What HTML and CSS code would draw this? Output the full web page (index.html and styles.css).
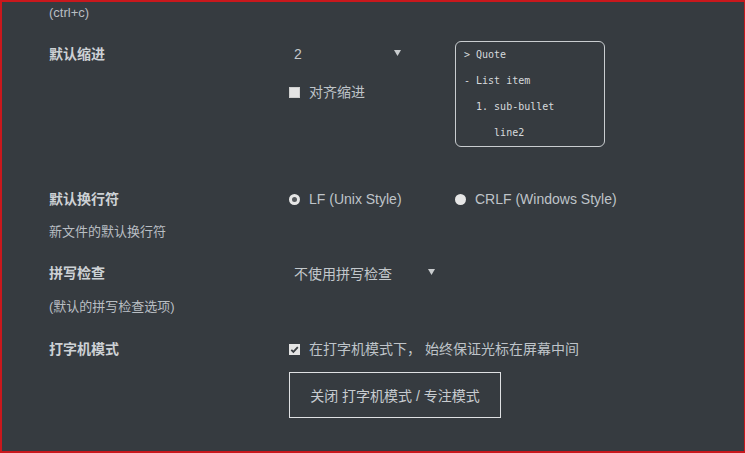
FILE: index.html
```html
<!DOCTYPE html>
<html lang="zh">
<head>
<meta charset="utf-8">
<title>设置</title>
<link rel="stylesheet" href="styles.css">
</head>
<body>
<div class="frame">
  <div class="settings">
    <div class="row row-copy">
      <div class="desc">(ctrl+c)</div>
    </div>

    <div class="row row-indent">
      <div class="label">默认缩进</div>
      <div class="control indent-control">
        <div class="indent-left">
          <div class="select select-short">
            <span class="select-text">2</span>
            <svg class="arrow" width="7" height="6" viewBox="0 0 7 6"><path d="M0 0 H7 L3.5 6 Z" fill="#c9ccce"/></svg>
          </div>
          <div class="check-line check-align">
            <span class="checkbox"></span>
            <span class="check-text">对齐缩进</span>
          </div>
        </div>
        <div class="preview">
          <div class="pline">&gt; Quote</div>
          <div class="pline">- List item</div>
          <div class="pline">  1. sub-bullet</div>
          <div class="pline">     line2</div>
        </div>
      </div>
    </div>

    <div class="row row-eol">
      <div class="label">默认换行符</div>
      <div class="control radios">
        <div class="radio-item radio-lf">
          <span class="radio checked"></span>
          <span class="check-text">LF (Unix Style)</span>
        </div>
        <div class="radio-item">
          <span class="radio"></span>
          <span class="check-text">CRLF (Windows Style)</span>
        </div>
      </div>
      <div class="desc desc-gap">新文件的默认换行符</div>
    </div>

    <div class="row row-spell">
      <div class="label">拼写检查</div>
      <div class="control">
        <div class="select select-long">
          <span class="select-text">不使用拼写检查</span>
          <svg class="arrow" width="7" height="6" viewBox="0 0 7 6"><path d="M0 0 H7 L3.5 6 Z" fill="#c9ccce"/></svg>
        </div>
      </div>
      <div class="desc desc-gap2">(默认的拼写检查选项)</div>
    </div>

    <div class="row row-type">
      <div class="label">打字机模式</div>
      <div class="control">
        <div class="check-line">
          <span class="checkbox checked">
            <svg width="11" height="11" viewBox="0 0 11 11"><path d="M2.3 5.8 L4.4 7.9 L8.8 3.2" fill="none" stroke="#3a3e42" stroke-width="1.8"/></svg>
          </span>
          <span class="check-text">在打字机模式下， 始终保证光标在屏幕中间</span>
        </div>
        <div class="button">关闭 打字机模式 / 专注模式</div>
      </div>
    </div>
  </div>
</div>
</body>
</html>
```

FILE: styles.css
```css
html, body {
  margin: 0;
  padding: 0;
  height: 100%;
}

body {
  background: #363b40;
  font-family: "Liberation Sans", "Noto Sans CJK SC", sans-serif;
  color: #b9bec3;
  overflow: hidden;
}

.frame {
  box-sizing: border-box;
  height: 453px;
  width: 745px;
  border: 2px solid #c9181d;
  border-right-width: 1px;
  background: #363b40;
}

.settings {
  padding: 1px 0 0 47px;
}

.row {
  display: grid;
  grid-template-columns: 240px auto;
  align-items: start;
}

.label {
  font-size: 14px;
  font-weight: bold;
  line-height: 20px;
  color: #cdd1d5;
}

.desc {
  grid-column: 1 / -1;
  font-size: 13px;
  line-height: 20px;
  color: #b9bec3;
}

.row-copy .desc {
  margin-top: 0;
}

/* indent row */
.row-indent {
  margin-top: 18px;
}

.row-indent .label {
  margin-top: 3px;
}

.indent-control {
  display: flex;
}

.indent-left {
  width: 166px;
  padding-top: 3px;
}

.select {
  display: flex;
  align-items: center;
  justify-content: space-between;
  box-sizing: border-box;
  height: 20px;
  padding: 0 4px 0 5px;
  font-size: 14px;
  color: #c3c8cc;
}

.select-short {
  width: 116px;
}

.select-long {
  width: 150px;
}

.arrow {
  margin-top: -3px;
}

.check-line {
  display: flex;
  align-items: center;
  height: 20px;
}

.check-align {
  margin-top: 18px;
}

.checkbox {
  box-sizing: border-box;
  width: 11px;
  height: 11px;
  background: #e4e4e4;
  border: 1px solid #cfcfcf;
  display: flex;
  align-items: center;
  justify-content: center;
  margin-right: 9px;
  flex: none;
}

.checkbox.checked {
  border: none;
}

.check-text {
  font-size: 14px;
  line-height: 20px;
  color: #bfc4c9;
}

.preview {
  box-sizing: border-box;
  width: 150px;
  height: 106px;
  border: 1px solid #c9cdd0;
  border-radius: 6px;
  padding: 0 0 0 8px;
  font-family: "DejaVu Sans Mono", "Liberation Mono", monospace;
  font-size: 10px;
  color: #d6dadd;
}

.pline {
  line-height: 26px;
  height: 26px;
  white-space: pre;
}

/* eol row */
.row-eol {
  margin-top: 42px;
}

.radios {
  display: flex;
  align-items: center;
}

.radio-item {
  display: flex;
  align-items: center;
  height: 20px;
}

.radio-lf {
  width: 166px;
}

.radio {
  box-sizing: border-box;
  width: 11px;
  height: 11px;
  border-radius: 50%;
  background: #e6e6e6;
  margin-right: 9px;
  flex: none;
  display: flex;
  align-items: center;
  justify-content: center;
}

.radio.checked::after {
  content: "";
  width: 5px;
  height: 5px;
  border-radius: 50%;
  background: #55595d;
}

.desc-gap {
  margin-top: 13px;
}

/* spell row */
.row-spell {
  margin-top: 21px;
}

.desc-gap2 {
  margin-top: 14px;
}

/* typewriter row */
.row-type {
  margin-top: 22px;
}

.button {
  box-sizing: border-box;
  margin-top: 13px;
  width: 212px;
  height: 46px;
  border: 1px solid #dfe1e3;
  display: flex;
  align-items: center;
  justify-content: center;
  font-size: 14px;
  color: #c8ccd0;
}
```
